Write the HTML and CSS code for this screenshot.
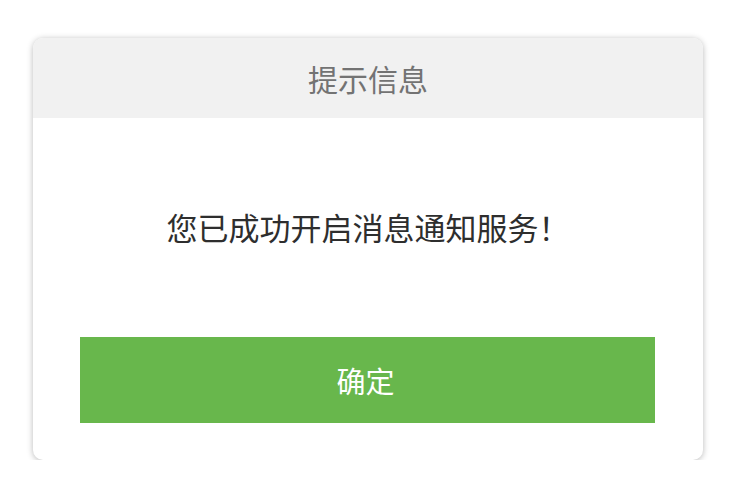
FILE: index.html
```html
<!DOCTYPE html>
<html lang="zh-CN">
<head>
<meta charset="utf-8">
<link rel="stylesheet" href="styles.css">
</head>
<body>
<div class="dialog">
  <div class="dialog-header">提示信息</div>
  <div class="dialog-body">您已成功开启消息通知服务！</div>
  <div class="dialog-footer">
    <button class="btn-ok">确定</button>
  </div>
</div>
</body>
</html>
```
FILE: styles.css
```css
html, body {
  margin: 0;
  padding: 0;
  background: #ffffff;
}
body {
  padding: 38px 36px 0 33px;
  font-family: "Noto Sans CJK SC", "Noto Sans", sans-serif;
}
.dialog {
  width: 670px;
  height: 422px;
  background: #ffffff;
  border-radius: 10px;
  box-shadow: 0 1px 6px rgba(0, 0, 0, 0.28);
  overflow: hidden;
  display: flex;
  flex-direction: column;
}
.dialog-header {
  height: 80px;
  background: #f1f1f1;
  color: #737373;
  font-size: 30px;
  display: flex;
  align-items: center;
  justify-content: center;
}
.dialog-body {
  height: 219px;
  display: flex;
  align-items: center;
  justify-content: center;
  color: #2e2e2e;
  font-size: 31px;
  padding-bottom: 2px;
  box-sizing: border-box;
}
.dialog-footer {
  padding: 0 48px 0 47px;
}
.btn-ok {
  width: 100%;
  height: 86px;
  border: none;
  border-radius: 0;
  background: #68b74c;
  color: #ffffff;
  font-family: "Noto Sans CJK SC", "Noto Sans", sans-serif;
  font-size: 29px;
  padding: 0 4px 0 0;
}
```
